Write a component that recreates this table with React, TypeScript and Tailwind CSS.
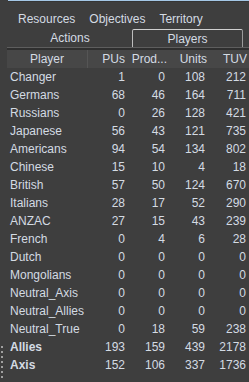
import React from "react";

type Row = {
  name: string;
  pus: number;
  prod: number;
  units: number;
  tuv: number;
  bold?: boolean;
};

const rows: Row[] = [
  { name: "Changer", pus: 1, prod: 0, units: 108, tuv: 212 },
  { name: "Germans", pus: 68, prod: 46, units: 164, tuv: 711 },
  { name: "Russians", pus: 0, prod: 26, units: 128, tuv: 421 },
  { name: "Japanese", pus: 56, prod: 43, units: 121, tuv: 735 },
  { name: "Americans", pus: 94, prod: 54, units: 134, tuv: 802 },
  { name: "Chinese", pus: 15, prod: 10, units: 4, tuv: 18 },
  { name: "British", pus: 57, prod: 50, units: 124, tuv: 670 },
  { name: "Italians", pus: 28, prod: 17, units: 52, tuv: 290 },
  { name: "ANZAC", pus: 27, prod: 15, units: 43, tuv: 239 },
  { name: "French", pus: 0, prod: 4, units: 6, tuv: 28 },
  { name: "Dutch", pus: 0, prod: 0, units: 0, tuv: 0 },
  { name: "Mongolians", pus: 0, prod: 0, units: 0, tuv: 0 },
  { name: "Neutral_Axis", pus: 0, prod: 0, units: 0, tuv: 0 },
  { name: "Neutral_Allies", pus: 0, prod: 0, units: 0, tuv: 0 },
  { name: "Neutral_True", pus: 0, prod: 18, units: 59, tuv: 238 },
  { name: "Allies", pus: 193, prod: 159, units: 439, tuv: 2178, bold: true },
  { name: "Axis", pus: 152, prod: 106, units: 337, tuv: 1736, bold: true },
];

const cols = "grid grid-cols-[81px_40px_40px_40px_41px]";

export default function App() {
  return (
    <div className="flex h-[382px] w-[249px] flex-col overflow-hidden bg-[#3e3e3e] font-['Liberation_Sans',sans-serif] text-[12px] leading-[18px] text-[#d4dbe3]">
      {/* top strip */}
      <div className="flex h-[3px] shrink-0">
        <div className="w-[8px]" />
        <div className="h-[2px] flex-1 border-b border-[#353535] bg-[#a4c7e6]" />
      </div>

      {/* tabs row 1 */}
      <div className="flex h-[26px] shrink-0 gap-[14px] pl-[18px] pt-[7px]">
        <span>Resources</span>
        <span>Objectives</span>
        <span>Territory</span>
      </div>

      {/* tabs row 2 */}
      <div className="flex h-[18px] shrink-0 pl-[8px]">
        <div className="flex w-[124px] items-center justify-center">Actions</div>
        <div className="flex w-[111px] items-center justify-center rounded-t-[2px] border-x border-t border-l-[#bdbdbd] border-r-[#9a9a9a] border-t-[#d0d0d0]">
          Players
        </div>
      </div>

      {/* pane border */}
      <div className="ml-[7px] h-[3px] shrink-0 border-t border-b-2 border-t-[#5e5e5e] border-b-[#2f2f2f]" />

      <div className="flex flex-1">
        {/* splitter gutter */}
        <div className="flex w-[7px] flex-col justify-end gap-[3px] pb-[4px] pl-[1px]">
          {[...Array(7)].map((_, i) => (
            <div key={i} className="h-[2px] w-[2px] bg-[#a0a0a0]" />
          ))}
        </div>

        {/* table */}
        <div className="flex-1">
          <div className={`${cols} h-[18px] bg-[#474747]`}>
            <div className="border-r border-[#555555] text-center">Player</div>
            <div className="pr-[3px] text-right">PUs</div>
            <div className="pr-[1px] text-right">Prod...</div>
            <div className="pr-[1px] text-right">Units</div>
            <div className="pr-[2px] text-right">TUV</div>
          </div>
          {rows.map((r) => (
            <div key={r.name} className={`${cols} h-[18px]`}>
              <div className={`pl-[3px] ${r.bold ? "font-bold" : ""}`}>{r.name}</div>
              <div className="pr-[3px] text-right">{r.pus}</div>
              <div className="pr-[3px] text-right">{r.prod}</div>
              <div className="pr-[3px] text-right">{r.units}</div>
              <div className="pr-[3px] text-right">{r.tuv}</div>
            </div>
          ))}
        </div>
      </div>
    </div>
  );
}
